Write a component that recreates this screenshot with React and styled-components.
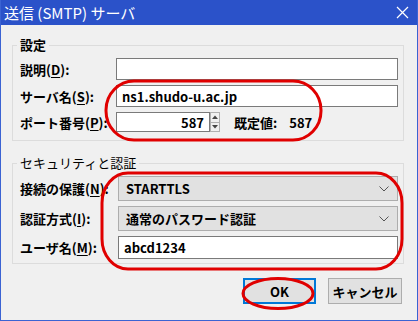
import React from 'react';
import styled, { createGlobalStyle } from 'styled-components';

const GlobalStyle = createGlobalStyle`
  html, body {
    margin: 0;
    padding: 0;
    background: #ffffff;
  }
  * {
    box-sizing: border-box;
  }
`;

const Window = styled.div`
  position: relative;
  width: 418px;
  height: 321px;
  display: flex;
  flex-direction: column;
  background: #f0f0f0;
  border: 1px solid #3b63d3;
  border-top: none;
  font-family: 'Noto Sans CJK JP', 'Noto Sans', sans-serif;
  color: #000;
  overflow: hidden;
`;

const TitleBar = styled.div`
  height: 25px;
  margin: 0 -1px;
  display: flex;
  align-items: center;
  justify-content: space-between;
  padding: 0 9px 0 4px;
  background: #2b52c9;
  color: #fff;
  font-size: 15px;
`;

const Body = styled.div`
  flex: 1;
  display: flex;
  flex-direction: column;
  padding: 13px 13px 0 11px;
`;

const Group = styled.fieldset`
  margin: 0;
  padding: ${(p) => p.$pad};
  border: 1px solid #dcdcdc;
  display: flex;
  flex-direction: column;
  gap: 5px;
  min-width: 0;
`;

const Legend = styled.legend`
  margin-left: -3px;
  padding: 0 3px;
  font-size: 13px;
  font-weight: ${(p) => (p.$bold ? 700 : 400)};
  line-height: 14px;
`;

const Row = styled.div`
  display: flex;
  align-items: center;
  height: ${(p) => p.$h}px;
`;

const Label = styled.label`
  width: ${(p) => p.$w}px;
  flex-shrink: 0;
  font-size: 13px;
  font-weight: 700;
  white-space: nowrap;
  u {
    text-decoration-thickness: 1px;
    text-underline-offset: 2px;
  }
`;

const TextBox = styled.div`
  flex: 1;
  height: 100%;
  display: flex;
  align-items: center;
  justify-content: ${(p) => (p.$right ? 'flex-end' : 'flex-start')};
  padding: 0 5px;
  background: #fff;
  border: 1px solid #7a7a7a;
  font-size: 13px;
  font-weight: 700;
`;

const PortBox = styled(TextBox)`
  flex: 0 0 94px;
`;

const Spinner = styled.div`
  width: 10px;
  height: 100%;
  display: flex;
  flex-direction: column;
`;

const SpinBtn = styled.div`
  flex: 1;
  display: flex;
  align-items: center;
  justify-content: center;
  background: #f0f0f0;
  border: 1px solid #b0b0b0;
  border-top-width: ${(p) => (p.$down ? 0 : 1)}px;
`;

const Default = styled.div`
  margin-left: 14px;
  display: flex;
  gap: 12px;
  font-size: 13px;
  font-weight: 700;
`;

const Combo = styled.div`
  flex: 1;
  height: 100%;
  display: flex;
  align-items: center;
  justify-content: space-between;
  padding: 0 8px 0 7px;
  background: #e1e1e1;
  border: 1px solid #adadad;
  font-size: 13px;
  font-weight: 700;
`;

const Buttons = styled.div`
  display: flex;
  justify-content: flex-end;
  gap: 12px;
  margin-top: 14px;
  padding-right: 2px;
`;

const Button = styled.div`
  width: ${(p) => p.$w}px;
  height: 26px;
  display: flex;
  align-items: center;
  justify-content: center;
  background: #e1e1e1;
  border: ${(p) => (p.$primary ? '2px solid #0078d7' : '1px solid #adadad')};
  font-size: 13px;
  font-weight: 700;
`;

const Marks = styled.svg`
  position: absolute;
  left: -1px;
  top: 0;
  pointer-events: none;
`;

const Chevron = () => (
  <svg width="10" height="6" viewBox="0 0 10 6">
    <path d="M0.5 0.5 L5 5 L9.5 0.5" fill="none" stroke="#555" strokeWidth="1" />
  </svg>
);

const Arrow = ({ down }) => (
  <svg width="6" height="4" viewBox="0 0 6 4">
    <path d={down ? 'M0 0 H6 L3 3.5 Z' : 'M0 4 H6 L3 0.5 Z'} fill="#444" />
  </svg>
);

export default function App() {
  return (
    <>
      <GlobalStyle />
      <Window>
        <TitleBar>
          <span>送信 (SMTP) サーバ</span>
          <svg width="13" height="13" viewBox="0 0 13 13">
            <path d="M1 1 L12 12 M12 1 L1 12" stroke="#fff" strokeWidth="1.2" />
          </svg>
        </TitleBar>
        <Body>
          <Group $pad="6px 5px 8px 7px">
            <Legend $bold>設定</Legend>
            <Row $h={22}>
              <Label $w={96}>説明(<u>D</u>):</Label>
              <TextBox />
            </Row>
            <Row $h={22}>
              <Label $w={96}>サーバ名(<u>S</u>):</Label>
              <TextBox>ns1.shudo-u.ac.jp</TextBox>
            </Row>
            <Row $h={20}>
              <Label $w={96}>ポート番号(<u>P</u>):</Label>
              <PortBox $right>587</PortBox>
              <Spinner>
                <SpinBtn><Arrow /></SpinBtn>
                <SpinBtn $down><Arrow down /></SpinBtn>
              </Spinner>
              <Default>
                <span>既定値:</span>
                <span>587</span>
              </Default>
            </Row>
          </Group>
          <Group $pad="6px 5px 4px 7px" style={{ marginTop: 15 }}>
            <Legend>セキュリティと認証</Legend>
            <Row $h={25}>
              <Label $w={98}>接続の保護(<u>N</u>):</Label>
              <Combo>
                <span>STARTTLS</span>
                <Chevron />
              </Combo>
            </Row>
            <Row $h={25}>
              <Label $w={98}>認証方式(<u>I</u>):</Label>
              <Combo>
                <span>通常のパスワード認証</span>
                <Chevron />
              </Combo>
            </Row>
            <Row $h={23}>
              <Label $w={98}>ユーザ名(<u>M</u>):</Label>
              <TextBox>abcd1234</TextBox>
            </Row>
          </Group>
          <Buttons>
            <Button $w={73} $primary>OK</Button>
            <Button $w={74}>キャンセル</Button>
          </Buttons>
        </Body>
        <Marks width="418" height="321" viewBox="0 0 418 321">
          <g fill="none" stroke="#e00000" strokeWidth="3">
            <rect x="106" y="81" width="215" height="59" rx="28" ry="29" />
            <rect x="102" y="173" width="300" height="96" rx="26" ry="30" />
            <ellipse cx="278" cy="293.5" rx="35" ry="15" />
          </g>
        </Marks>
      </Window>
    </>
  );
}
